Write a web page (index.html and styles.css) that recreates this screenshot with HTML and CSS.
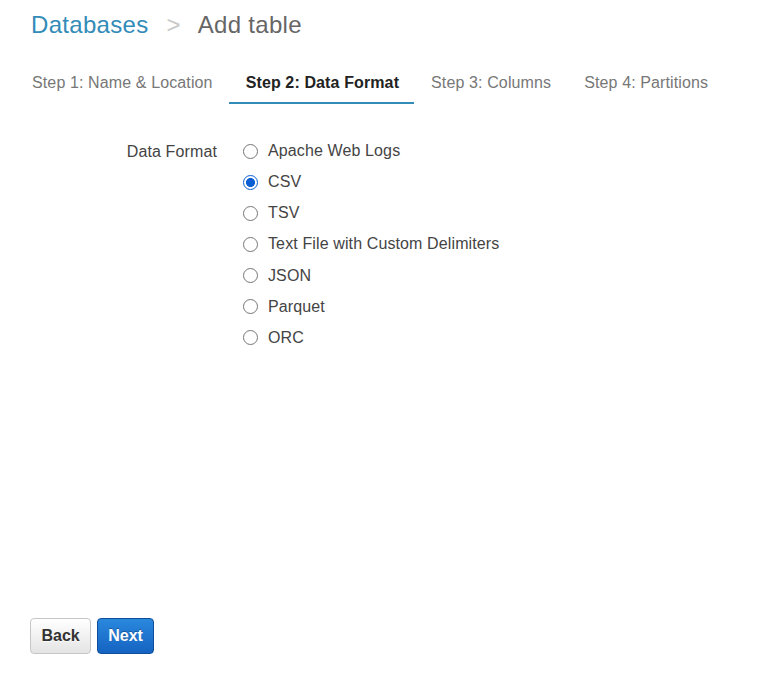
FILE: index.html
```html
<!DOCTYPE html>
<html>
<head>
<meta charset="utf-8">
<link rel="stylesheet" href="styles.css">
</head>
<body>
<div class="page">
  <h1 class="crumbs"><a class="crumb-link" href="#">Databases</a><span class="sep">&gt;</span><span class="crumb-current">Add table</span></h1>
  <ul class="tabs">
    <li class="tab">Step 1: Name &amp; Location</li>
    <li class="tab active">Step 2: Data Format</li>
    <li class="tab">Step 3: Columns</li>
    <li class="tab">Step 4: Partitions</li>
  </ul>
  <div class="form">
    <div class="form-label">Data Format</div>
    <div class="options">
      <label class="option"><input type="radio" name="fmt"><span>Apache Web Logs</span></label>
      <label class="option"><input type="radio" name="fmt" checked><span>CSV</span></label>
      <label class="option"><input type="radio" name="fmt"><span>TSV</span></label>
      <label class="option"><input type="radio" name="fmt"><span>Text File with Custom Delimiters</span></label>
      <label class="option"><input type="radio" name="fmt"><span>JSON</span></label>
      <label class="option"><input type="radio" name="fmt"><span>Parquet</span></label>
      <label class="option"><input type="radio" name="fmt"><span>ORC</span></label>
    </div>
  </div>
  <div class="actions">
    <button class="btn btn-default">Back</button>
    <button class="btn btn-primary">Next</button>
  </div>
</div>
</body>
</html>
```
FILE: styles.css
```css
* { box-sizing: border-box; }
html, body { margin: 0; padding: 0; }
body {
  font-family: "Liberation Sans", Arial, sans-serif;
  font-size: 16px;
  letter-spacing: 0.12px;
  color: #333;
  background: #fff;
}
.page {
  height: 674px;
  display: flex;
  flex-direction: column;
  padding: 0 0 20px 0;
}
.crumbs {
  margin: 11px 0 0 31px;
  font-size: 24px;
  font-weight: normal;
  line-height: 28px;
  letter-spacing: 0.3px;
  display: flex;
  align-items: baseline;
}
.crumb-link { color: #338bb8; text-decoration: none; }
.sep { color: #c8c8c8; margin: 0 17px 0 18px; }
.crumb-current { color: #666; }
.tabs {
  list-style: none;
  margin: 24px 0 0 15px;
  padding: 0;
  display: flex;
}
.tab {
  padding: 11px 16px 10px 17px;
  line-height: 18px;
  color: #777;
  border-bottom: 2px solid transparent;
}
.tab.active {
  color: #222;
  font-weight: bold;
  border-bottom-color: #338bb8;
  padding-right: 15px;
}
.form {
  margin: 37px 0 0 30px;
  display: grid;
  grid-template-columns: 187px 1fr;
  column-gap: 26px;
  flex: 1;
  align-content: start;
}
.form-label {
  text-align: right;
  line-height: 20px;
  color: #444;
  padding-top: 1px;
}
.options { display: flex; flex-direction: column; gap: 11.17px; }
.option {
  display: flex;
  align-items: center;
  line-height: 20px;
  color: #444;
}
.option input {
  -webkit-appearance: none;
  appearance: none;
  margin: 0 10px 0 0;
  width: 15px;
  height: 15px;
  border-radius: 50%;
  border: 1px solid #767676;
  background: #fff;
  flex: none;
}
.option input:checked {
  border: 1px solid #0b5fd3;
  background: radial-gradient(circle, #0b5fd3 0 4.2px, #fff 4.8px);
}
.actions {
  display: flex;
  gap: 6px;
  padding-left: 30px;
}
.btn {
  font-family: "Liberation Sans", Arial, sans-serif;
  font-size: 16px;
  font-weight: bold;
  height: 36px;
  padding: 0 10.5px;
  border-radius: 4px;
  cursor: pointer;
}
.btn-default {
  color: #333;
  background: linear-gradient(#ffffff, #e4e4e4);
  border: 1px solid #c6c6c6;
  text-shadow: 0 1px 1px rgba(255,255,255,0.75);
}
.btn-primary {
  color: #fff;
  background: linear-gradient(#2a88dd, #1563c2);
  border: 1px solid #0f4f99;
  text-shadow: 0 -1px 0 rgba(0,0,0,0.3);
  padding: 0 10px;
}
```
